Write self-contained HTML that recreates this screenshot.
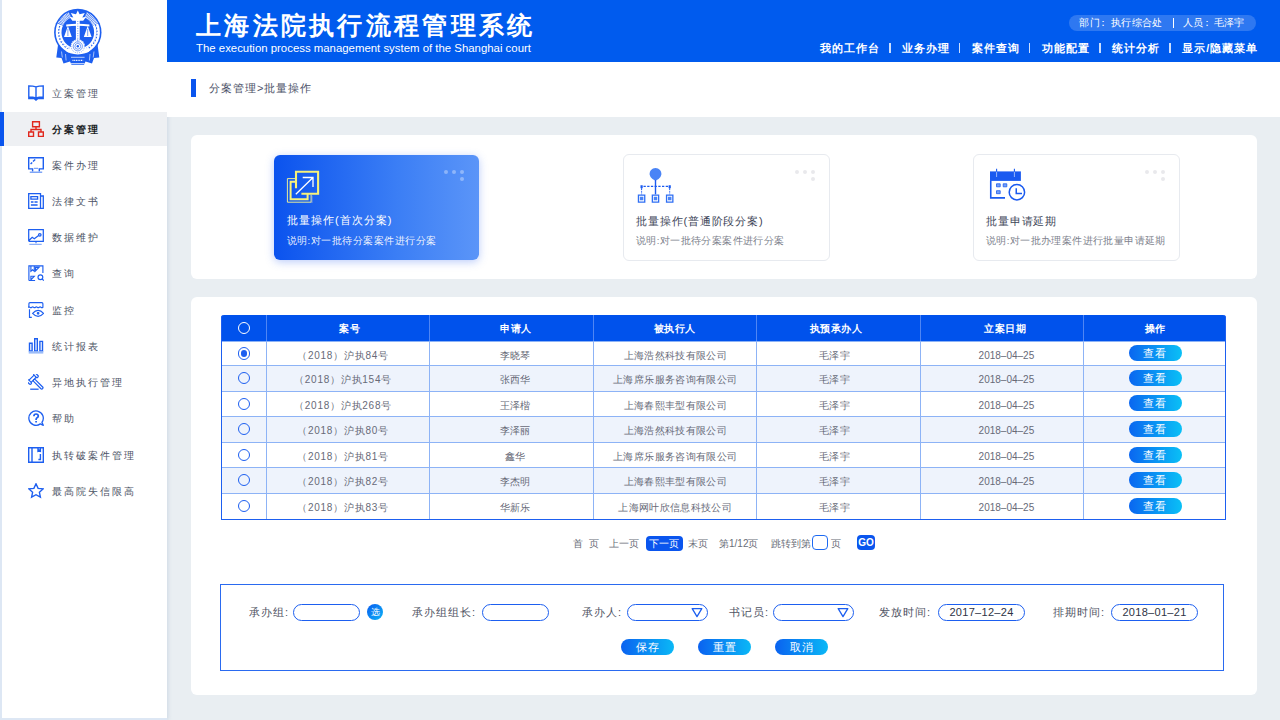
<!DOCTYPE html>
<html><head><meta charset="utf-8">
<style>
*{margin:0;padding:0;box-sizing:border-box}
html,body{width:1280px;height:720px;overflow:hidden;background:#e9eef2;font-family:"Liberation Sans",sans-serif}
.a{position:absolute;white-space:nowrap}
#side{position:absolute;left:0;top:0;width:167px;height:720px;background:#fff;box-shadow:1px 0 4px rgba(170,190,215,.45)}
#hdr{position:absolute;left:167px;top:0;width:1113px;height:62px;background:#005bee}
#crumb{position:absolute;left:167px;top:62px;width:1113px;height:54.6px;background:#fff}
.panel{position:absolute;background:#fff;border-radius:6px}
.nav{position:absolute;left:0;width:167px;height:34px}
.nav .t{position:absolute;left:51.6px;top:.5px;line-height:34px;font-size:10px;letter-spacing:2.1px;color:#4d5466}
.nav svg{position:absolute;left:28px;top:9px;width:16px;height:16px;fill:none;stroke:#1d5ff0;stroke-width:1.4}
.sel{background:#eef0f3}
.sel .t{color:#1c1f26;font-weight:bold}
.sel:before{content:"";position:absolute;left:0;top:0;width:4px;height:34px;background:#0a55ee}
.card{position:absolute;width:207px;height:106.5px;border-radius:6px;background:#fff;border:1px solid #e7eaef}
.card.act{width:205px;height:105px;border:none;background:linear-gradient(90deg,#0b53ee 0%,#3b7ef5 60%,#5b95f8 100%);box-shadow:0 2px 9px rgba(60,110,240,.35)}
.ct{position:absolute;left:12px;top:57.5px;font-size:11px;line-height:16px;letter-spacing:.85px;color:#404658;white-space:nowrap}
.cs{position:absolute;left:12px;top:78.5px;font-size:9.5px;line-height:13px;letter-spacing:.4px;color:#7d818c;white-space:nowrap}
.dots{position:absolute;left:169.5px;top:14.5px}
.dots i{position:absolute;width:4.4px;height:4.4px;border-radius:50%;background:#e9e9ec}
.dots.w i{background:rgba(255,255,255,.35)}
#tbl table{border-collapse:collapse;width:1005px;table-layout:fixed}
.tr{position:absolute;left:0;width:1005px;height:25.6px}
.c{position:absolute;top:0;height:100%;text-align:center;font-size:10px;letter-spacing:1px;color:#62666f}
.pg{position:absolute;top:536px;line-height:15px;font-size:10px;color:#6a6e78;white-space:nowrap}
.fl{position:absolute;top:604px;line-height:16px;font-size:11px;letter-spacing:1px;color:#4f5363;white-space:nowrap}
.fi{position:absolute;top:604px;height:16.5px;border:1.2px solid #1d5ff0;border-radius:9px;background:#fff;font-size:11px;line-height:14px;color:#2e3345;letter-spacing:.3px}
.fb{position:absolute;top:639px;width:53px;margin-left:1px;height:16px;border-radius:8px;background:linear-gradient(90deg,#0a62f0,#0ab8f6);color:#fff;font-size:11px;line-height:16px;text-align:center;letter-spacing:1px}
.hd{top:1px;height:25.5px;line-height:25.5px;text-align:center;color:#fff;font-size:10px;font-weight:bold;letter-spacing:.5px}
.cell{height:25.6px;line-height:30.4px;text-align:center;font-size:9.5px;letter-spacing:.35px;color:#676a78}
.style2{letter-spacing:.75px;font-size:10px}
.dt{font-size:10px;letter-spacing:0}
.vbtn{width:53px;height:16px;border-radius:8px;background:linear-gradient(90deg,#0a66f0,#0ac0f6);color:#fff;font-size:11px;line-height:16px;text-align:center;letter-spacing:1px}
.hp{position:absolute;top:14.8px;line-height:16px;font-size:10px;font-weight:500;letter-spacing:.4px;color:#fff;white-space:nowrap}
.hn{position:absolute;top:40px;line-height:16px;font-size:11px;font-weight:700;letter-spacing:1px;color:#fff;white-space:nowrap}
.hs{position:absolute;top:43px;width:1.8px;height:10px;background:rgba(255,255,255,.8)}
</style></head><body>
<div id="side">
<div class="a" style="left:0;top:0;width:2px;height:720px;background:#dde7f4"></div>
<div class="a" style="left:0;top:718px;width:167px;height:2px;background:#dde7f4"></div>
<!-- emblem -->
<svg class="a" style="left:50px;top:5px" width="56" height="62" viewBox="0 0 56 62">
 <path d="M8 40 L6.3 52.5 L11.5 53 L13.5 58.5 L20 56.5 L21.5 59.8 H34 L35.5 56.5 L42 58.5 L44 53 L49.3 52.5 L47.6 40 Z" fill="#1d5ff0"/>
 <path d="M11.5 46.5l.8 6 M15.5 49l.6 6.5 M44 46.5l-.8 6 M40 49l-.6 6.5" stroke="#fff" stroke-width=".6" fill="none"/>
 <path d="M21 52.3h13.6 M21 58.5h13.6" stroke="#fff" stroke-width=".7"/>
 <path d="M22.5 55.4h10.6" stroke="#fff" stroke-width="1.2" stroke-dasharray="1 .7"/>
 <circle cx="27.8" cy="27.4" r="23.7" fill="#1d5ff0"/>
 <path d="M35.61 9.86 A19.2 19.2 0 0 1 27.8 46.6 A19.2 19.2 0 0 1 19.99 9.86" fill="none" stroke="#fff" stroke-width="5.8"/>
 <path d="M35.61 9.86 A19.2 19.2 0 0 1 45.34 19.59 M10.26 19.59 A19.2 19.2 0 0 1 19.99 9.86" fill="none" stroke="#1d5ff0" stroke-width="5.9" stroke-dasharray=".55 .8"/>
 <path d="M45.34 19.59 A19.2 19.2 0 0 1 37.4 44.03 M18.2 44.03 A19.2 19.2 0 0 1 10.26 19.59" fill="none" stroke="#1d5ff0" stroke-width="1.1" stroke-dasharray="1.5 1.6"/>
 <path d="M45.5 21 A17.5 17.5 0 0 1 36 43 M19.6 43 A17.5 17.5 0 0 1 10.1 21" fill="none" stroke="#1d5ff0" stroke-width=".5" stroke-dasharray="1 2.2"/>
 <g fill="#fff">
  <path d="M27.8 5.5 L29.6 9.2 L34.8 8 L32.3 12.5 L36.2 11.8 L33.2 15.8 H22.4 L19.4 11.8 L23.3 12.5 L20.8 8 L26 9.2 Z"/>
  <path d="M25.9 14h3.8v25h-3.8z"/>
  <path d="M16.2 19.6 Q27.8 17.8 39.4 19.6 v2 Q27.8 19.9 16.2 21.6z"/>
  <path d="M17.9 21 L14 32 H21.8z M37.7 21 L33.8 32 H41.6z"/>
  <circle cx="27.8" cy="41.3" r="7"/>
  <ellipse cx="17.8" cy="45.5" rx="2.6" ry="1.6" transform="rotate(35 17.8 45.5)"/>
  <ellipse cx="37.8" cy="45.5" rx="2.6" ry="1.6" transform="rotate(-35 37.8 45.5)"/>
 </g>
 <path d="M27.8 16v22" stroke="#1d5ff0" stroke-width=".8" stroke-dasharray=".8 1.6"/>
 <path d="M17.9 24v7 M37.7 24v7" stroke="#1d5ff0" stroke-width=".6"/>
 <circle cx="27.8" cy="41.3" r="6.6" fill="none" stroke="#1d5ff0" stroke-width=".5" stroke-dasharray="1 1"/>
 <circle cx="27.8" cy="41.3" r="4.6" fill="none" stroke="#1d5ff0" stroke-width=".6"/>
 <circle cx="27.8" cy="41.3" r="2.9" fill="none" stroke="#1d5ff0" stroke-width=".6"/>
 <circle cx="27.8" cy="41.3" r="1.2" fill="#1d5ff0"/>
</svg>

<div class="nav" style="top:76px"><svg viewBox="0 0 16 16"><path d="M.8 .9Q5 .9 8 1.8 11 .9 15.2.9v12.6H10L8 15 6 13.5H.8z M8 1.8V15 M.8 11.9Q5 11.9 8 13 11 11.9 15.2 11.9"/></svg><span class="t">立案管理</span></div>
<div class="nav sel" style="top:112px"><svg viewBox="0 0 16 16" style="stroke:#e0281e"><path d="M4.6.7h6.8v5H4.6z M8 5.7v2.8 M3 11V8.5h10V11 M.7 11h4.8v4.4H.7z M10.5 11h4.8v4.4h-4.8z"/></svg><span class="t">分案管理</span></div>
<div class="nav" style="top:148px"><svg viewBox="0 0 16 16"><path d="M4.6 11.9H.7V.7h14.6v11.2h-4 M2.6 7l1.6-1.6 M5 4.6l2.2-2.2 M4.6 11.2v3.2 M11.3 11.2v3.2"/><path d="M6 11.4h4 M1.8 15.2h12.4" stroke="#7fa5f6"/></svg><span class="t">案件办理</span></div>
<div class="nav" style="top:184px"><svg viewBox="0 0 16 16"><path d="M.7.7h11.8v14.6H.7z M12.5 3h2.8v12.3h-2.8 M2.9 3.6h6.7v2.6H2.9z M2.9 9h2.6 M6.5 9h3.1 M2.9 12h6.7" stroke-width="1.3"/></svg><span class="t">法律文书</span></div>
<div class="nav" style="top:220px"><svg viewBox="0 0 16 16" style="stroke-width:1.25"><path d="M.7 12.3V.7h14.6v11.6H.7 M1.2 11.2L4.2 8.3 6.3 9.7 10.6 6.5"/><circle cx="11.8" cy="5.8" r="1.25"/><path d="M8 12.3v2" stroke-width="1"/><path d="M1.3 15.6h12.4" stroke="#8fb0f7" stroke-width="1.7"/></svg><span class="t">数据维护</span></div>
<div class="nav" style="top:256px"><svg viewBox="0 0 16 16" style="stroke-width:1.15"><path d="M.9 15.5V.9h14v7.2 M.9 15.5h6.2 M2.9.9v5.3l1.7-1.5 1.7 1.5V.9 M7.6 2.3h3.4l-3.4 3.6z M2.9 11.2h3.4l-3.4 3.6z M14.2 14l1.6 1.6"/><circle cx="12.4" cy="12.2" r="2.4"/></svg><span class="t">查询</span></div>
<div class="nav" style="top:293px"><svg viewBox="0 0 16 16" style="stroke-width:1.15"><path d="M.9 5.2V1.7Q.9.6 2 .6h11.8q1.1 0 1.1 1.1v3.5q-.9.8-1.9 0-.9-.8-1.8 0-.9.8-1.9 0-.9-.8-1.8 0-.9.8-1.9 0-.9-.8-1.8 0-.9.8-1.9 0-.9-.8-1.8 0z M1.5 7.3v8h2.3 M4.6 11.3q2.7-3 5.5-3t5.5 3q-2.7 3-5.5 3t-5.5-3z"/><circle cx="10.1" cy="11.3" r=".8" fill="#1d5ff0"/></svg><span class="t">监控</span></div>
<div class="nav" style="top:329px"><svg viewBox="0 0 16 16"><path d="M1.5 5.2h2.6v7.8H1.5z M6.7 .7h2.6v12.3H6.7z M11.9 3.4h2.6v9.6h-2.6z"/><path d="M.7 14.4h14.6" stroke-width="2.4" stroke="#9cbcf8"/></svg><span class="t">统计报表</span></div>
<div class="nav" style="top:365px"><svg viewBox="0 0 16 16"><g transform="translate(4.6 4.7) rotate(-45)" stroke-width="1.2"><rect x="-6" y="-2.6" width="2.4" height="5.2" rx="1.1"/><rect x="3.6" y="-2.6" width="2.4" height="5.2" rx="1.1"/><path d="M-3.6-1.5h7.2 M-3.6 1.5h7.2"/><rect x="-1.2" y="1.5" width="2.4" height="12.6" rx="1.1"/></g><path d="M2.2 15.2h8.4" stroke-width="1.3"/></svg><span class="t">异地执行管理</span></div>
<div class="nav" style="top:401px"><svg viewBox="0 0 16 16"><path d="M13.9 12.3A7.2 7.2 0 1 0 12.3 13.9L15.3 15.3z" stroke-width="1.3" stroke-linejoin="round"/><path d="M5.9 6.3q0-2.3 2.2-2.3t2.2 2.1q0 1.1-1.2 1.7-1 .5-1 1.6v.5 M8.1 10.9v1.6" stroke-width="1.7"/></svg><span class="t">帮助</span></div>
<div class="nav" style="top:438px"><svg viewBox="0 0 16 16"><path d="M.7.7h14.6v14.6H.7z M4 .7v14.6 M10 .7v3.4l1.2-1 1.2 1V.7 M12.4 7v5.5h-2"/></svg><span class="t">执转破案件管理</span></div>
<div class="nav" style="top:474px"><svg viewBox="0 0 16 16"><path d="M8 .8l2.1 4.6 5 .5-3.7 3.4 1 4.9L8 11.7l-4.4 2.5 1-4.9L.9 5.9l5-.5z"/></svg><span class="t">最高院失信限高</span></div>
</div>

<div id="hdr">
 <div class="a" style="left:29px;top:7.5px;font-size:25px;line-height:34px;font-weight:700;letter-spacing:3.28px;color:#fff">上海法院执行流程管理系统</div>
 <div class="a" style="left:29px;top:41px;font-size:11.4px;line-height:14px;color:#fff">The execution process management system of the Shanghai court</div>
 <div class="a" style="left:902px;top:14.8px;width:187.2px;height:15.9px;border-radius:8px;background:rgba(255,255,255,.18)"></div>
 <div class="hp" style="left:912.4px">部门</div>
 <div class="hp" style="left:931.3px">：</div>
 <div class="hp" style="left:943.9px">执行综合处</div>
 <div class="a" style="left:1005.6px;top:17.8px;width:1.3px;height:10.2px;background:#fff"></div>
 <div class="hp" style="left:1015.6px">人员</div>
 <div class="hp" style="left:1034.5px">：</div>
 <div class="hp" style="left:1046.7px">毛泽宇</div>
 <div class="hn" style="left:652.6px">我的工作台</div>
 <div class="hs" style="left:722px"></div>
 <div class="hn" style="left:734.7px">业务办理</div>
 <div class="hs" style="left:791.5px"></div>
 <div class="hn" style="left:804.7px">案件查询</div>
 <div class="hs" style="left:861.6px"></div>
 <div class="hn" style="left:875.1px">功能配置</div>
 <div class="hs" style="left:932.1px"></div>
 <div class="hn" style="left:945px">统计分析</div>
 <div class="hs" style="left:1002px"></div>
 <div class="hn" style="left:1015.3px">显示/隐藏菜单</div>
</div>

<div id="crumb">
 <div class="a" style="left:24px;top:17px;width:5px;height:18px;background:#0a55ee"></div>
 <div class="a" style="left:42px;top:18px;line-height:16px;font-size:11px;letter-spacing:1px;color:#4a5066">分案管理&gt;批量操作</div>
</div>

<div class="panel" style="left:191px;top:135px;width:1066px;height:144px"></div>
<div class="panel" style="left:191px;top:297px;width:1066px;height:398px"></div>

<!-- cards -->
<div class="card act" style="left:274px;top:155px">
 <svg class="a" style="left:10px;top:13px" width="38" height="38" viewBox="0 0 38 38" fill="none">
  <path d="M27.1 26.8V34.2H3.4V10.6H11" stroke="#e8ec9a" stroke-width="1"/>
  <path d="M27.9 27.6V35M12.1 11.4" stroke="#9fb3d8" stroke-width=".8"/>
  <path d="M23.6 25.8V31.2H6.6V13.8H12" stroke="#f7f27a" stroke-width="2"/>
  <path d="M12 20.2V3.7H34.1V25.8H17.4" stroke="#f7f27a" stroke-width="2.1"/>
  <path d="M11.8 26.3L29 9.5 M18.7 9.5H29V19" stroke="#fff" stroke-width="1.3"/>
 </svg>
 <div class="ct" style="color:#fff;left:13px;top:57px;letter-spacing:1px">批量操作(首次分案)</div>
 <div class="cs" style="color:rgba(255,255,255,.92);left:12.5px;letter-spacing:.5px">说明:对一批待分案案件进行分案</div>
 <div class="dots w"><i style="left:0;top:0"></i><i style="left:8px;top:0"></i><i style="left:16px;top:0"></i><i style="left:16px;top:7.5px"></i></div>
</div>
<div class="card" style="left:623px;top:154px">
 <svg class="a" style="left:12.5px;top:11px" width="40" height="40" viewBox="0 0 40 40" fill="none">
  <path d="M18.5 14.8L15.46 12.96A5.9 5.9 0 1 1 21.54 12.96Z" fill="#4a84f6"/>
  <path d="M18.5 14v14.4" stroke="#1a5af0" stroke-width="1.4"/>
  <path d="M6.5 20.4h26" stroke="#1a5af0" stroke-width="1.1" stroke-dasharray="2.3 1.4"/>
  <path d="M4.6 22.8v5.6 M32.7 22.8v5.6" stroke="#1a5af0" stroke-width="1" stroke-dasharray="1.4 1"/>
  <path d="M3.5 19.2h2.2v2.7l-1.1 1.1-1.1-1.1z M31.6 19.2h2.2v2.7l-1.1 1.1-1.1-1.1z" fill="#1a5af0"/>
  <path d="M1.45 29.05h6.3v7H1.45z M15.35 29.05h6.3v7h-6.3z M29.55 29.05h6.3v7h-6.3z" stroke="#2f6ff4" stroke-width="1.3"/>
  <path d="M2.85 30.75h3.5v3.5h-3.5z M16.75 30.75h3.5v3.5h-3.5z M30.95 30.75h3.5v3.5h-3.5z" fill="#4a84f6"/>
 </svg>
 <div class="ct">批量操作(普通阶段分案)</div>
 <div class="cs">说明:对一批待分案案件进行分案</div>
 <div class="dots" style="left:171px"><i style="left:0;top:0"></i><i style="left:8px;top:0"></i><i style="left:16px;top:0"></i><i style="left:16px;top:7.5px"></i></div>
</div>
<div class="card" style="left:973px;top:154px">
 <svg class="a" style="left:14px;top:11.7px" width="40" height="36" viewBox="0 0 40 36" fill="none">
  <path d="M2 4.4h30.9v9.5H2z" fill="#1a5af0"/>
  <path d="M8.6 5v5 M26.4 5v5" stroke="#9ab8f8" stroke-width="1"/>
  <path d="M8.6 1.7v3 M26.4 1.7v3" stroke="#1a5af0" stroke-width="1.1"/>
  <path d="M2.75 13.5V30.9H17" stroke="#1a5af0" stroke-width="1.6"/>
  <path d="M8.5 16.8h3.7v3H8.5z M15.2 16.8h3.6v3h-3.6z M8.5 23.7h3.7v3H8.5z" fill="#78a2f6" stroke="#1a5af0" stroke-width=".8"/>
  <circle cx="28.9" cy="25.2" r="7.7" fill="#fff" stroke="#1a5af0" stroke-width="1.5"/>
  <path d="M28.25 21.3V26.4H34" stroke="#1a5af0" stroke-width="1.5"/>
 </svg>
 <div class="ct">批量申请延期</div>
 <div class="cs">说明:对一批办理案件进行批量申请延期</div>
 <div class="dots" style="left:171px"><i style="left:0;top:0"></i><i style="left:8px;top:0"></i><i style="left:16px;top:0"></i><i style="left:16px;top:7.5px"></i></div>
</div>

<!-- table -->
<div id="tbl" class="a" style="left:221px;top:315px;width:1005px;height:205px">
 <div class="a" style="left:0;top:0;width:1005px;height:25.5px;background:#0052ec;border-radius:3px 3px 0 0"></div>
 <div class="a" style="left:44.5px;top:0;width:1px;height:25.5px;background:#4f86f4"></div>
 <div class="a" style="left:208.0px;top:0;width:1px;height:25.5px;background:#4f86f4"></div>
 <div class="a" style="left:371.5px;top:0;width:1px;height:25.5px;background:#4f86f4"></div>
 <div class="a" style="left:535.0px;top:0;width:1px;height:25.5px;background:#4f86f4"></div>
 <div class="a" style="left:698.5px;top:0;width:1px;height:25.5px;background:#4f86f4"></div>
 <div class="a" style="left:862.0px;top:0;width:1px;height:25.5px;background:#4f86f4"></div>
 <div class="a" style="left:16.9px;top:7px;width:12.2px;height:12.2px;border-radius:50%;border:1.2px solid #fff"></div>
 <div class="a hd" style="left:68.90px;width:120px">案号</div>
 <div class="a hd" style="left:234.80px;width:120px">申请人</div>
 <div class="a hd" style="left:393.85px;width:120px">被执行人</div>
 <div class="a hd" style="left:554.80px;width:120px">执预承办人</div>
 <div class="a hd" style="left:724.30px;width:120px">立案日期</div>
 <div class="a hd" style="left:874.40px;width:120px">操作</div>
 <div class="a" style="left:0;top:25.5px;width:1005px;height:24.60px;background:#fff;border-top:1px solid #8db3f6"></div>
 <div class="a" style="left:16.9px;top:32.40px;width:12.2px;height:12.2px;border-radius:50%;border:1.2px solid #1d5ff0"></div>
 <div class="a" style="left:19.9px;top:35.40px;width:6.2px;height:6.2px;border-radius:50%;background:#1d5ff0"></div>
 <div class="a cell style2" style="left:42.00px;top:25.5px;width:160px">（2018）沪执84号</div>
 <div class="a cell" style="left:214.30px;top:25.5px;width:160px">李晓琴</div>
 <div class="a cell" style="left:374.25px;top:25.5px;width:160px">上海浩然科技有限公司</div>
 <div class="a cell" style="left:533.50px;top:25.5px;width:160px">毛泽宇</div>
 <div class="a cell dt" style="left:705.40px;top:25.5px;width:160px">2018–04–25</div>
 <div class="a vbtn" style="left:907.8px;top:30.10px">查看</div>
 <div class="a" style="left:0;top:50.1px;width:1005px;height:25.60px;background:#eef3fc;border-top:1px solid #8db3f6"></div>
 <div class="a" style="left:16.9px;top:57.00px;width:12.2px;height:12.2px;border-radius:50%;border:1.2px solid #1d5ff0"></div>
 <div class="a cell style2" style="left:42.00px;top:50.1px;width:160px">（2018）沪执154号</div>
 <div class="a cell" style="left:214.30px;top:50.1px;width:160px">张西华</div>
 <div class="a cell" style="left:374.25px;top:50.1px;width:160px">上海席乐服务咨询有限公司</div>
 <div class="a cell" style="left:533.50px;top:50.1px;width:160px">毛泽宇</div>
 <div class="a cell dt" style="left:705.40px;top:50.1px;width:160px">2018–04–25</div>
 <div class="a vbtn" style="left:907.8px;top:54.70px">查看</div>
 <div class="a" style="left:0;top:75.7px;width:1005px;height:25.60px;background:#fff;border-top:1px solid #8db3f6"></div>
 <div class="a" style="left:16.9px;top:82.60px;width:12.2px;height:12.2px;border-radius:50%;border:1.2px solid #1d5ff0"></div>
 <div class="a cell style2" style="left:42.00px;top:75.7px;width:160px">（2018）沪执268号</div>
 <div class="a cell" style="left:214.30px;top:75.7px;width:160px">王泽楷</div>
 <div class="a cell" style="left:374.25px;top:75.7px;width:160px">上海春熙丰型有限公司</div>
 <div class="a cell" style="left:533.50px;top:75.7px;width:160px">毛泽宇</div>
 <div class="a cell dt" style="left:705.40px;top:75.7px;width:160px">2018–04–25</div>
 <div class="a vbtn" style="left:907.8px;top:80.30px">查看</div>
 <div class="a" style="left:0;top:101.3px;width:1005px;height:25.60px;background:#eef3fc;border-top:1px solid #8db3f6"></div>
 <div class="a" style="left:16.9px;top:108.20px;width:12.2px;height:12.2px;border-radius:50%;border:1.2px solid #1d5ff0"></div>
 <div class="a cell style2" style="left:42.00px;top:101.3px;width:160px">（2018）沪执80号</div>
 <div class="a cell" style="left:214.30px;top:101.3px;width:160px">李泽丽</div>
 <div class="a cell" style="left:374.25px;top:101.3px;width:160px">上海浩然科技有限公司</div>
 <div class="a cell" style="left:533.50px;top:101.3px;width:160px">毛泽宇</div>
 <div class="a cell dt" style="left:705.40px;top:101.3px;width:160px">2018–04–25</div>
 <div class="a vbtn" style="left:907.8px;top:105.90px">查看</div>
 <div class="a" style="left:0;top:126.9px;width:1005px;height:25.40px;background:#fff;border-top:1px solid #8db3f6"></div>
 <div class="a" style="left:16.9px;top:133.80px;width:12.2px;height:12.2px;border-radius:50%;border:1.2px solid #1d5ff0"></div>
 <div class="a cell style2" style="left:42.00px;top:126.9px;width:160px">（2018）沪执81号</div>
 <div class="a cell" style="left:214.30px;top:126.9px;width:160px">鑫华</div>
 <div class="a cell" style="left:374.25px;top:126.9px;width:160px">上海席乐服务咨询有限公司</div>
 <div class="a cell" style="left:533.50px;top:126.9px;width:160px">毛泽宇</div>
 <div class="a cell dt" style="left:705.40px;top:126.9px;width:160px">2018–04–25</div>
 <div class="a vbtn" style="left:907.8px;top:131.50px">查看</div>
 <div class="a" style="left:0;top:152.3px;width:1005px;height:25.90px;background:#eef3fc;border-top:1px solid #8db3f6"></div>
 <div class="a" style="left:16.9px;top:159.20px;width:12.2px;height:12.2px;border-radius:50%;border:1.2px solid #1d5ff0"></div>
 <div class="a cell style2" style="left:42.00px;top:152.3px;width:160px">（2018）沪执82号</div>
 <div class="a cell" style="left:214.30px;top:152.3px;width:160px">李杰明</div>
 <div class="a cell" style="left:374.25px;top:152.3px;width:160px">上海春熙丰型有限公司</div>
 <div class="a cell" style="left:533.50px;top:152.3px;width:160px">毛泽宇</div>
 <div class="a cell dt" style="left:705.40px;top:152.3px;width:160px">2018–04–25</div>
 <div class="a vbtn" style="left:907.8px;top:156.90px">查看</div>
 <div class="a" style="left:0;top:178.2px;width:1005px;height:26.30px;background:#fff;border-top:1px solid #8db3f6"></div>
 <div class="a" style="left:16.9px;top:185.10px;width:12.2px;height:12.2px;border-radius:50%;border:1.2px solid #1d5ff0"></div>
 <div class="a cell style2" style="left:42.00px;top:178.2px;width:160px">（2018）沪执83号</div>
 <div class="a cell" style="left:214.30px;top:178.2px;width:160px">华新乐</div>
 <div class="a cell" style="left:374.25px;top:178.2px;width:160px">上海网叶欣信息科技公司</div>
 <div class="a cell" style="left:533.50px;top:178.2px;width:160px">毛泽宇</div>
 <div class="a cell dt" style="left:705.40px;top:178.2px;width:160px">2018–04–25</div>
 <div class="a vbtn" style="left:907.8px;top:182.80px">查看</div>
 <div class="a" style="left:44.5px;top:25.5px;width:1px;height:179.5px;background:#8db3f6"></div>
 <div class="a" style="left:208.0px;top:25.5px;width:1px;height:179.5px;background:#8db3f6"></div>
 <div class="a" style="left:371.5px;top:25.5px;width:1px;height:179.5px;background:#8db3f6"></div>
 <div class="a" style="left:535.0px;top:25.5px;width:1px;height:179.5px;background:#8db3f6"></div>
 <div class="a" style="left:698.5px;top:25.5px;width:1px;height:179.5px;background:#8db3f6"></div>
 <div class="a" style="left:862.0px;top:25.5px;width:1px;height:179.5px;background:#8db3f6"></div>
 <div class="a" style="left:0;top:0;width:1005px;height:205px;border:1.3px solid #1d5ff0;border-top:none;border-radius:3px 3px 0 0"></div>
 </div>

<!-- pager -->
<div class="pg" style="left:573px">首 &nbsp;页</div>
<div class="pg" style="left:609px">上一页</div>
<div class="a" style="left:646px;top:536px;width:37px;height:15px;border-radius:4px;background:#0a55ee"></div>
<div class="pg" style="left:649px;color:#fff">下一页</div>
<div class="pg" style="left:688px">末页</div>
<div class="pg" style="left:719px">第1/12页</div>
<div class="pg" style="left:771px">跳转到第</div>
<div class="a" style="left:812px;top:535px;width:16px;height:15px;border-radius:4px;border:1.2px solid #1d6af2;background:#fff"></div>
<div class="pg" style="left:831px">页</div>
<div class="a" style="left:857px;top:535px;width:18px;height:15px;border-radius:4px;background:#0a55ee;color:#fff;font-size:10px;font-weight:bold;line-height:15px;text-align:center">GO</div>

<!-- form -->
<div class="a" style="left:220px;top:584px;width:1004px;height:87px;border:1.3px solid #2a6af0"></div>
<div class="fl" style="left:249px">承办组:</div>
<div class="fi" style="left:293px;width:67px"></div>
<div class="a" style="left:367px;top:604px;width:16px;height:16px;border-radius:50%;background:linear-gradient(135deg,#0a5cf0,#0ab4f6);color:#fff;font-size:9px;line-height:16px;text-align:center">选</div>
<div class="fl" style="left:412px">承办组组长:</div>
<div class="fi" style="left:482px;width:67px"></div>
<div class="fl" style="left:582px">承办人:</div>
<div class="fi sel2" style="left:627px;width:81px"><svg class="a" style="right:4px;top:2.2px" width="12" height="11" viewBox="0 0 12 11"><path d="M1.2 1.6h9.6L6 9.6z" fill="none" stroke="#1d5ff0" stroke-width="1.3" stroke-linejoin="round"/></svg></div>
<div class="fl" style="left:729px">书记员:</div>
<div class="fi sel2" style="left:773px;width:81px"><svg class="a" style="right:4px;top:2.2px" width="12" height="11" viewBox="0 0 12 11"><path d="M1.2 1.6h9.6L6 9.6z" fill="none" stroke="#1d5ff0" stroke-width="1.3" stroke-linejoin="round"/></svg></div>
<div class="fl" style="left:879px">发放时间:</div>
<div class="fi" style="left:938px;width:87px;text-align:center">2017–12–24</div>
<div class="fl" style="left:1053px">排期时间:</div>
<div class="fi" style="left:1111px;width:87px;text-align:center">2018–01–21</div>
<div class="fb" style="left:620px">保存</div>
<div class="fb" style="left:697px">重置</div>
<div class="fb" style="left:774px">取消</div>
</body></html>
